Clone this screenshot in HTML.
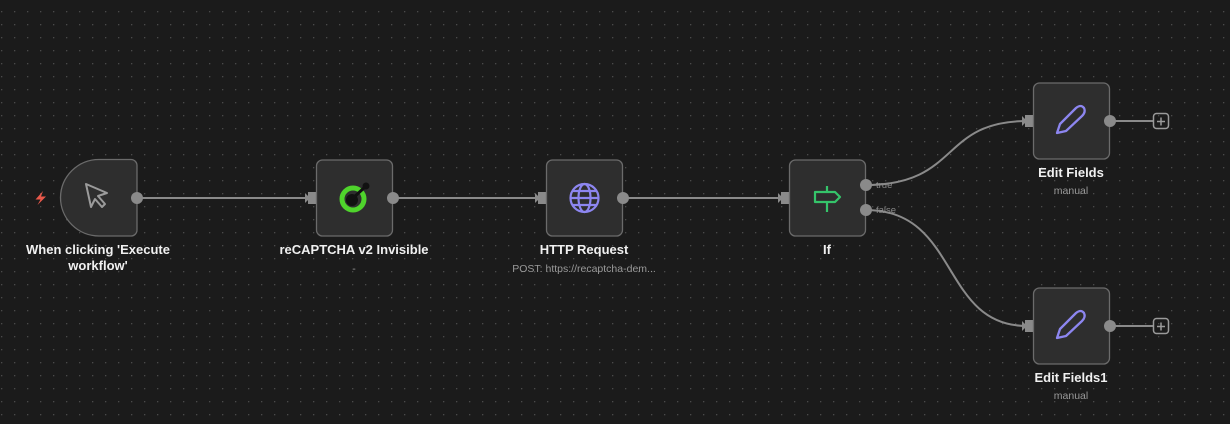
<!DOCTYPE html>
<html><head><meta charset="utf-8"><style>
html,body{margin:0;padding:0;background:#1b1b1b;width:1230px;height:424px;overflow:hidden}
text{font-family:"Liberation Sans",sans-serif}
</style></head><body>
<svg width="1230" height="424" xmlns="http://www.w3.org/2000/svg">
<defs>
<pattern id="g" x="1" y="11" width="13" height="13" patternUnits="userSpaceOnUse">
<rect x="0" y="0" width="1.3" height="1.3" fill="#4a4a4a"/>
</pattern>
</defs>
<rect width="1230" height="424" fill="#1b1b1b"/>
<rect width="1230" height="424" fill="url(#g)"/>

<g stroke="#8a8a8a" stroke-width="2" fill="none">
<line x1="137" y1="198" x2="310" y2="198"/>
<line x1="393" y1="198" x2="540" y2="198"/>
<line x1="623" y1="198" x2="783" y2="198"/>
<path d="M866 185 C 960 185, 940 121, 1027 121"/>
<path d="M866 210 C 960 210, 940 326, 1027 326"/>
<line x1="1110" y1="121" x2="1153" y2="121"/>
<line x1="1110" y1="326" x2="1153" y2="326"/>
</g>
<g fill="#8a8a8a">
<rect x="308" y="192" width="9" height="12"/><polygon points="305,193 310,198 305,203"/>
<rect x="538" y="192" width="9" height="12"/><polygon points="535,193 540,198 535,203"/>
<rect x="781" y="192" width="9" height="12"/><polygon points="778,193 783,198 778,203"/>
<rect x="1025" y="115" width="9" height="12"/><polygon points="1022,116 1027,121 1022,126"/>
<rect x="1025" y="320" width="9" height="12"/><polygon points="1022,321 1027,326 1022,331"/>
</g>
<g fill="none" stroke="#9a9a9a" stroke-width="1.5">
<rect x="1153.5" y="113.5" width="15" height="15" rx="3"/>
<rect x="1153.5" y="318.5" width="15" height="15" rx="3"/>
<path d="M1161 117.5v8M1157 121.5h8M1161 322.5v8M1157 326.5h8"/>
</g>

<g fill="#2e2e2e" stroke="#6b6b6b" stroke-width="1.3">
<path d="M99 159.5 H131 a6 6 0 0 1 6 6 V230 a6 6 0 0 1 -6 6 H99 a38.5 38.5 0 0 1 -38.5 -38.5 a38.5 38.5 0 0 1 38.5 -38"/>
<rect x="316.5" y="160" width="76" height="76" rx="6"/>
<rect x="546.5" y="160" width="76" height="76" rx="6"/>
<rect x="789.5" y="160" width="76" height="76" rx="6"/>
<rect x="1033.5" y="83" width="76" height="76" rx="6"/>
<rect x="1033.5" y="288" width="76" height="76" rx="6"/>
</g>
<g fill="#8a8a8a">
<circle cx="137" cy="198" r="6"/><circle cx="393" cy="198" r="6"/><circle cx="623" cy="198" r="6"/>
<circle cx="866" cy="185" r="6"/><circle cx="866" cy="210" r="6"/>
<circle cx="1110" cy="121" r="6"/><circle cx="1110" cy="326" r="6"/>
</g>
<line x1="872" y1="185" x2="876" y2="185" stroke="#8a8a8a"/><line x1="872" y1="210" x2="876" y2="210" stroke="#8a8a8a"/>
<text x="876" y="188" font-size="9.5" fill="#8a8a8a">true</text>
<text x="876" y="213" font-size="9.5" fill="#8a8a8a">false</text>

<path d="M43 191 L35.5 199.5 H40.5 L37.5 205 L46 196.5 H41 Z" fill="#e8584a"/>
<path d="M86 184 L107 193 L98 196 L105 204 L102 207 L95 199 L91 207 Z" fill="none" stroke="#9b9b9b" stroke-width="2" stroke-linejoin="round"/>
<circle cx="353" cy="199" r="11" fill="none" stroke="#4fd42c" stroke-width="5"/>
<circle cx="352" cy="200" r="6" fill="#111"/>
<line x1="352" y1="199" x2="365" y2="187" stroke="#111" stroke-width="3"/>
<circle cx="366" cy="186" r="3.5" fill="#111"/>
<g fill="none" stroke="#8d86f0" stroke-width="2.2">
<circle cx="584.5" cy="198" r="14"/>
<ellipse cx="584.5" cy="198" rx="6" ry="14"/>
<line x1="570.5" y1="198" x2="598.5" y2="198"/>
<path d="M572 191h25M572 205h25"/>
</g>
<g fill="none" stroke="#35c46a" stroke-width="2.2" stroke-linejoin="round">
<path d="M815 192 H835 L840 197 L835 202 H815 Z"/>
<line x1="827" y1="186" x2="827" y2="192"/><line x1="827" y1="202" x2="827" y2="212"/>
</g>
<g fill="none" stroke="#8d86f0" stroke-width="2.3" stroke-linejoin="round">
<path d="M1057 133 L1060 124 L1076 108 Q1081 104 1084 108 Q1086 112 1082 116 L1066 131 Z"/>
<path d="M1057 338 L1060 329 L1076 313 Q1081 309 1084 313 Q1086 317 1082 321 L1066 336 Z"/>
</g>

<g fill="#f0f0f0" font-size="13" font-weight="bold" text-anchor="middle">
<text x="98" y="254">When clicking 'Execute</text>
<text x="98" y="270">workflow'</text>
<text x="354" y="254">reCAPTCHA v2 Invisible</text>
<text x="584" y="254">HTTP Request</text>
<text x="827" y="254">If</text>
<text x="1071" y="177">Edit Fields</text>
<text x="1071" y="382">Edit Fields1</text>
</g>
<g fill="#9a9a9a" font-size="10.5" text-anchor="middle">
<text x="354" y="272">-</text>
<text x="584" y="272">POST: https://recaptcha-dem...</text>
<text x="1071" y="194">manual</text>
<text x="1071" y="399">manual</text>
</g>
</svg>
</body></html>
